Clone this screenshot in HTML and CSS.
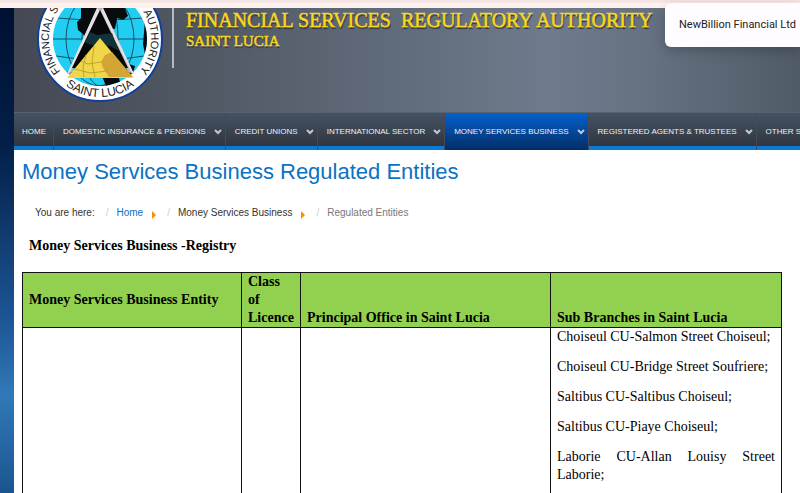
FILE: index.html
```html
<!DOCTYPE html>
<html lang="en">
<head>
    <meta charset="UTF-8">
    <meta name="viewport" content="width=device-width, initial-scale=1.0">
    <title>Money Services Business Regulated Entities</title>
    <link rel="stylesheet" href="styles.css">
</head>
<body>
    <div class="top-strip"></div>
    <div class="tooltip">NewBillion Financial Ltd</div>

    <div class="page">
        <header class="header">
            <svg class="emblem" viewBox="0 0 128 96" role="img" aria-label="Financial Services Regulatory Authority">
                <defs>
                    <path id="ring-left" d="M64 82 A51 51 0 0 1 64 -20"/>
                    <path id="ring-right" d="M64 -20 A51 51 0 0 1 64 82"/>
                    <path id="ring-bottom" d="M6 31 A58 58 0 0 0 122 31"/>
                    <clipPath id="globe"><circle cx="64" cy="31" r="47"/></clipPath>
                </defs>
                <circle cx="64" cy="31" r="62" fill="#fff" stroke="#123f98" stroke-width="2"/>
                <circle cx="64" cy="31" r="47" fill="#22cdf2"/>
                <g clip-path="url(#globe)">
                    <g fill="none" stroke="#14516a" stroke-width="1">
                        <path d="M17 31H111M21 10Q64 14 107 10M20 48Q64 56 108 48M31 64Q64 72 97 64"/>
                        <ellipse cx="64" cy="31" rx="18" ry="47"/>
                        <ellipse cx="64" cy="31" rx="34" ry="47"/>
                    </g>
                    <path fill="#080b0e" d="M45 0H89L92 8 87 12 81 10 79 21 72 20 68 34 57 42 47 26 42 22 41 14 45 10z"/>
                    <path fill="#080b0e" d="M109 12L113 20 110 52 107 36zM66 68L82 66 84 74 70 78zM90 55L99 58 96 68 86 66z"/>
                </g>
                <path fill="#b8b4b8" d="M61 0H67L98 66 92 64 64 6 36 64 31 66z"/>
                <path fill="#e4e0e4" d="M61 0L31 66 34 64 64 3zM67 0L98 66 95 64 65 3z"/>
                <path fill="#050708" d="M64 2L92 60H36z"/>
                <path fill="#123138" d="M54 24L61 27 76 25 79 34 83 43 74 38 55 37 49 34z"/>
                <path fill="#f2d64a" d="M64 30L97 70H31z"/>
                <path fill="#d3a534" d="M76 44L97 69H73L67 60 65 54 69 47z"/>
                <path fill="none" stroke="#bfa52d" d="M45 53L52 56 65 54M39 61L54 65 72 63M58 38L56 55 59 69M50 47L47 59 48 69"/>
                <g class="ring-text">
                    <text><textPath href="#ring-left" startOffset="45">FINANCIAL SERVICES</textPath></text>
                    <text text-anchor="end"><textPath href="#ring-right" startOffset="115">REGULATORY AUTHORITY</textPath></text>
                    <text class="ring-name" text-anchor="middle"><textPath href="#ring-bottom" startOffset="50%">SAINT LUCIA</textPath></text>
                </g>
            </svg>
            <div class="brand">
                <div class="brand-name">FINANCIAL SERVICES&nbsp; REGULATORY AUTHORITY</div>
                <div class="brand-place">SAINT LUCIA</div>
            </div>
        </header>

        <nav class="nav">
            <a href="#">HOME</a>
            <a href="#">DOMESTIC INSURANCE &amp; PENSIONS <svg class="chevron" viewBox="0 0 8 6"><path d="M1 1L4 4 7 1"/></svg></a>
            <a href="#">CREDIT UNIONS <svg class="chevron" viewBox="0 0 8 6"><path d="M1 1L4 4 7 1"/></svg></a>
            <a href="#">INTERNATIONAL SECTOR <svg class="chevron" viewBox="0 0 8 6"><path d="M1 1L4 4 7 1"/></svg></a>
            <a href="#" class="active">MONEY SERVICES BUSINESS <svg class="chevron" viewBox="0 0 8 6"><path d="M1 1L4 4 7 1"/></svg></a>
            <a href="#">REGISTERED AGENTS &amp; TRUSTEES <svg class="chevron" viewBox="0 0 8 6"><path d="M1 1L4 4 7 1"/></svg></a>
            <a href="#">OTHER SERVICES</a>
        </nav>

        <main class="content">
            <h1>Money Services Business Regulated Entities</h1>

            <ul class="breadcrumb">
                <li>You are here:</li>
                <li><a href="#" class="home">Home</a><span class="arrow"></span></li>
                <li><a href="#">Money Services Business</a><span class="arrow"></span></li>
                <li class="current">Regulated Entities</li>
            </ul>

            <h2>Money Services Business -Registry</h2>

            <table class="registry">
                <colgroup>
                    <col class="col-entity">
                    <col class="col-class">
                    <col class="col-office">
                    <col class="col-branches">
                </colgroup>
                <thead>
                    <tr>
                        <th class="middle">Money Services Business Entity</th>
                        <th>Class of Licence</th>
                        <th>Principal Office in Saint Lucia</th>
                        <th>Sub Branches in Saint Lucia</th>
                    </tr>
                </thead>
                <tbody>
                    <tr>
                        <td></td>
                        <td></td>
                        <td></td>
                        <td>
                            <p>Choiseul CU-Salmon Street Choiseul;</p>
                            <p>Choiseul CU-Bridge Street Soufriere;</p>
                            <p>Saltibus CU-Saltibus Choiseul;</p>
                            <p>Saltibus CU-Piaye Choiseul;</p>
                            <p>Laborie CU-Allan Louisy Street Laborie;</p>
                        </td>
                    </tr>
                </tbody>
            </table>
        </main>
    </div>
</body>
</html>
```
FILE: styles.css
```css
:root {
    --blue: #0a7ad6;
    --heading: #0b72c4;
    --green: #92d050;
    --orange: #ff8a00;
}

* {
    margin: 0;
    padding: 0;
    box-sizing: border-box;
}

body {
    height: 100vh;
    overflow: hidden;
    font-family: "Liberation Sans", Arial, sans-serif;
    background: linear-gradient(#000f30, #03204a 30%, #1d5695 65%, #3079b8 80%, #1b5590);
}

.top-strip {
    height: 8px;
    background: linear-gradient(#f3e4e4 2px, #fff1ed 3px);
}

.tooltip {
    position: absolute;
    top: 3px;
    right: 0;
    padding: 14px 4px 14px 14px;
    border-radius: 6px 0 0 6px;
    background: #fffcff;
    color: #222;
    font-family: Roboto, sans-serif;
    font-size: 11px;
    line-height: 16px;
    box-shadow: 0 4px 12px rgba(0, 0, 0, 0.2);
}

.page {
    margin-left: 14px;
    background: #fff;
}

/* Header */
.header {
    display: flex;
    gap: 22px;
    height: 104px;
    padding-left: 22px;
    overflow: hidden;
    background: linear-gradient(90deg, #454955, #4e5661 20%, #657080 55%, #6f7b8c 68%, #667282 80%, #505b67);
}

.emblem {
    width: 128px;
    height: 96px;
    flex-shrink: 0;
}

.ring-text {
    fill: #222;
    font-size: 11px;
}

.ring-name {
    font-size: 12px;
}

.brand {
    position: relative;
    padding-top: 1px;
    color: #f9d71c;
    font-family: "Liberation Serif", "Times New Roman", serif;
    white-space: nowrap;
    -webkit-text-stroke: 0.5px #f9d71c;
    text-shadow: 1px 2px 1px #303743;
}

.brand::before {
    content: "";
    position: absolute;
    top: 0;
    left: -14px;
    width: 2px;
    height: 60px;
    background: #b4bac3;
}

.brand-name {
    font-size: 20px;
    line-height: 22px;
}

.brand-place {
    font-size: 15px;
    line-height: 20px;
}

/* Main menu */
.nav {
    display: flex;
    height: 38px;
    overflow: hidden;
    border-top: 1px solid #566370;
    background: linear-gradient(#465262, #303640 33px, var(--blue) 33px);
}

.nav a {
    display: flex;
    align-items: center;
    gap: 8px;
    padding: 0 3px 0 9px;
    border-right: 1px solid #444b57;
    color: #eef1f4;
    font-size: 8px;
    text-decoration: none;
    white-space: nowrap;
}

.nav a:first-child {
    padding: 0 7px 0 8px;
}

.nav a.active {
    background: linear-gradient(#0560cd, #022e66);
}

.chevron {
    width: 8px;
    height: 6px;
    fill: none;
    stroke: #c3c9d0;
    stroke-width: 2;
}

/* Content */
.content {
    padding: 8px 18px 0 8px;
}

h1 {
    color: var(--heading);
    font-size: 22px;
    font-weight: 400;
    line-height: 28px;
}

.breadcrumb {
    display: flex;
    padding: 18px 0 0 13px;
    list-style: none;
    color: #333;
    font-size: 10px;
    line-height: 18px;
}

.breadcrumb li {
    display: flex;
    align-items: center;
}

.breadcrumb li + li::before {
    content: "/";
    padding: 0 8px 0 11px;
    color: #ccc;
}

.breadcrumb a {
    color: #333;
    text-decoration: none;
}

.breadcrumb a.home {
    color: var(--heading);
}

.breadcrumb .current {
    color: #777;
}

.arrow {
    margin: 4px 0 0 9px;
    border: 4px solid transparent;
    border-left-color: var(--orange);
    border-right: 0;
}

h2 {
    padding: 15px 0 17px 7px;
    font-family: "Liberation Serif", "Times New Roman", serif;
    font-size: 14px;
    line-height: 18px;
}

.registry {
    width: 100%;
    table-layout: fixed;
    border-collapse: collapse;
    font-family: "Liberation Serif", "Times New Roman", serif;
    font-size: 14px;
    line-height: 18px;
}

.col-entity {
    width: 219px;
}

.col-class {
    width: 59px;
}

.col-office {
    width: 250px;
}

.registry th,
.registry td {
    padding: 0 6px;
    border: 1px solid #111;
}

.registry th {
    background: var(--green);
    text-align: left;
    vertical-align: bottom;
}

.registry th.middle {
    vertical-align: middle;
}

.registry td {
    vertical-align: top;
    text-align: justify;
}

.registry p {
    margin-bottom: 12px;
}
```
